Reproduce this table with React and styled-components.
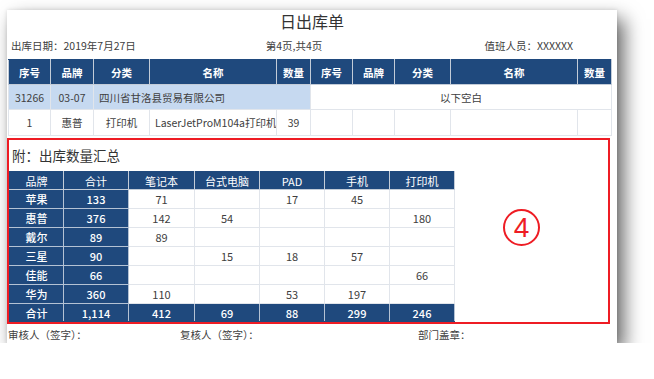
import React from "react";
import styled, { createGlobalStyle } from "styled-components";

const GlobalStyle = createGlobalStyle`
  html, body {
    margin: 0;
    background: #ffffff;
  }
  body {
    font-family: "Noto Sans CJK SC", "Noto Sans", sans-serif;
    color: #404040;
  }
`;

const mainCols = [42, 43, 56, 127, 34, 42, 42, 56, 127, 34];
const mainHead = ["序号", "品牌", "分类", "名称", "数量"];

const sumCols = [54, 65, 66, 65, 65, 65, 65];
const sumHead = ["品牌", "合计", "笔记本", "台式电脑", "PAD", "手机", "打印机"];
const sumRows = [
  ["苹果", "133", "71", "", "17", "45", ""],
  ["惠普", "376", "142", "54", "", "", "180"],
  ["戴尔", "89", "89", "", "", "", ""],
  ["三星", "90", "", "15", "18", "57", ""],
  ["佳能", "66", "", "", "", "", "66"],
  ["华为", "360", "110", "", "53", "197", ""],
];
const sumTotal = ["合计", "1,114", "412", "69", "88", "299", "246"];

export default function App() {
  return (
    <>
      <GlobalStyle />
      <Sheet>
        <Title>日出库单</Title>
        <InfoRow>
          <span>出库日期：2019年7月27日</span>
          <span className="page">第4页,共4页</span>
          <span className="duty">值班人员：XXXXXX</span>
        </InfoRow>

        <MainTable>
          <colgroup>
            {mainCols.map((w, i) => (
              <col key={i} style={{ width: w }} />
            ))}
          </colgroup>
          <thead>
            <tr>
              {[...mainHead, ...mainHead].map((h, i) => (
                <HeadCell key={i}>{h}</HeadCell>
              ))}
            </tr>
          </thead>
          <tbody>
            <tr>
              <Cell $tint>31266</Cell>
              <Cell $tint>03-07</Cell>
              <Cell $tint $left colSpan={3}>
                四川省甘洛县贸易有限公司
              </Cell>
              <Cell colSpan={5}>以下空白</Cell>
            </tr>
            <tr className="tall">
              <Cell>1</Cell>
              <Cell>惠普</Cell>
              <Cell>打印机</Cell>
              <Cell $left>LaserJetProM104a打印机</Cell>
              <Cell>39</Cell>
              <Cell />
              <Cell />
              <Cell />
              <Cell />
              <Cell />
            </tr>
          </tbody>
        </MainTable>

        <SummaryBox>
          <SummaryTitle>附：出库数量汇总</SummaryTitle>
          <SummaryBody>
            <SummaryTable>
              <colgroup>
                {sumCols.map((w, i) => (
                  <col key={i} style={{ width: w }} />
                ))}
              </colgroup>
              <thead>
                <tr>
                  {sumHead.map((h) => (
                    <SumHead key={h}>{h}</SumHead>
                  ))}
                </tr>
              </thead>
              <tbody>
                {sumRows.map((row) => (
                  <tr key={row[0]}>
                    {row.map((v, i) => (
                      <SumCell key={i} $dark={i < 2}>
                        {v}
                      </SumCell>
                    ))}
                  </tr>
                ))}
                <tr>
                  {sumTotal.map((v, i) => (
                    <SumCell key={i} $dark $total>
                      {v}
                    </SumCell>
                  ))}
                </tr>
              </tbody>
            </SummaryTable>
            <MarkArea>
              <Mark>4</Mark>
            </MarkArea>
          </SummaryBody>
        </SummaryBox>

        <Footer>
          <span>审核人（签字）：</span>
          <span>复核人（签字）：</span>
          <span>部门盖章：</span>
        </Footer>
      </Sheet>
    </>
  );
}

const Sheet = styled.div`
  margin: 10px 0 0 7px;
  width: 610px;
  height: 333px;
  background: #ffffff;
  box-shadow: 7px 9px 18px rgba(0, 0, 0, 0.6), 0 0 4px rgba(0, 0, 0, 0.12);
  overflow: hidden;
`;

const Title = styled.div`
  height: 22px;
  line-height: 22px;
  text-align: center;
  font-size: 16px;
  color: #333;
`;

const InfoRow = styled.div`
  display: grid;
  grid-template-columns: 1fr auto 1fr;
  align-items: center;
  height: 27px;
  padding: 0 44px 0 4px;
  font-size: 10.5px;
  color: #404040;
  .page {
    padding-left: 4px;
  }
  .duty {
    justify-self: end;
  }
`;

const MainTable = styled.table`
  margin-left: 1px;
  width: 603px;
  table-layout: fixed;
  border-collapse: collapse;
  font-size: 10.5px;
  tr {
    height: 25px;
  }
  tr.tall {
    height: 26px;
  }
`;

const HeadCell = styled.th`
  background: #1f497d;
  color: #ffffff;
  font-weight: 700;
  padding: 0;
  border: 1px solid #c3ccd8;
  border-top-color: #1f497d;
  text-align: center;
`;

const Cell = styled.td`
  background: ${(p) => (p.$tint ? "#c6d9f0" : "#ffffff")};
  border: 1px solid #e1e5eb;
  padding: ${(p) => (p.$left ? "0 0 0 5px" : "0")};
  text-align: ${(p) => (p.$left ? "left" : "center")};
  white-space: nowrap;
  overflow: hidden;
  color: #404040;
`;

const SummaryBox = styled.div`
  margin-top: 2px;
  width: 603px;
  box-sizing: border-box;
  border: 2px solid #ee1c24;
`;

const SummaryTitle = styled.div`
  height: 31px;
  line-height: 31px;
  padding-left: 3px;
  font-size: 13.5px;
  color: #333;
`;

const SummaryBody = styled.div`
  display: flex;
  align-items: flex-start;
`;

const SummaryTable = styled.table`
  width: 445px;
  table-layout: fixed;
  border-collapse: collapse;
  font-size: 11px;
  tr {
    height: 19px;
  }
  thead tr,
  tr:last-child {
    height: 18px;
  }
`;

const SumHead = styled.th`
  background: #1f497d;
  color: #ffffff;
  font-weight: 400;
  padding: 0;
  border: 1px solid #c3ccd8;
  border-top-color: #1f497d;
  border-left-color: #1f497d;
`;

const SumCell = styled.td`
  padding: 0;
  text-align: center;
  background: ${(p) => (p.$dark ? "#1f497d" : "#ffffff")};
  color: ${(p) => (p.$dark ? "#ffffff" : "#404040")};
  font-weight: ${(p) => (p.$total || p.$dark ? 500 : 400)};
  border: 1px solid ${(p) => (p.$dark ? "#b4c2d4" : "#e1e5eb")};
  &:first-child {
    border-left-color: #1f497d;
  }
  ${(p) => p.$total && "border-bottom-color: #1f497d;"}
`;

const MarkArea = styled.div`
  flex: 1;
  display: flex;
  justify-content: center;
  padding: 38px 20px 0 0;
`;

const Mark = styled.div`
  width: 33px;
  height: 33px;
  border: 2.5px solid #ee1c24;
  border-radius: 50%;
  display: flex;
  align-items: center;
  justify-content: center;
  font-family: "Liberation Sans", Arial, sans-serif;
  font-size: 28px;
  line-height: 1;
  color: #ee1c24;
`;

const Footer = styled.div`
  display: grid;
  grid-template-columns: 172px 238px 1fr;
  height: 21px;
  align-items: center;
  padding-left: 1px;
  font-size: 10.5px;
  color: #404040;
`;
